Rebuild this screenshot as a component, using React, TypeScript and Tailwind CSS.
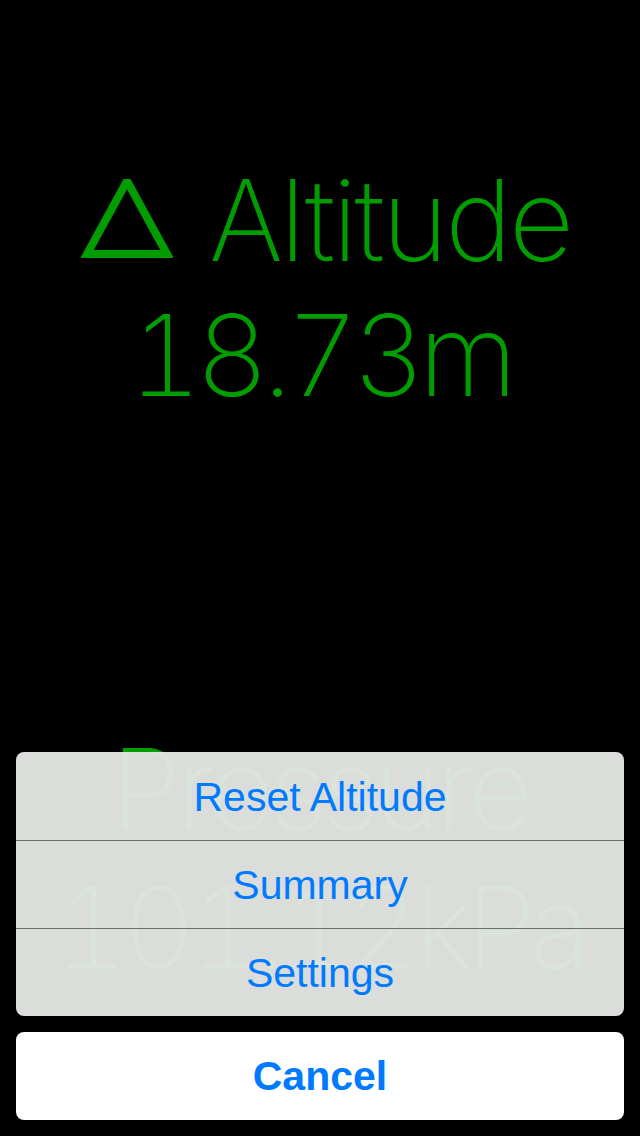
import React from "react";

const readings = [
  { label: "Pressure", value: "101.12kPa" },
];

function Delta() {
  return (
    <svg width="92" height="84" viewBox="0 0 92 84" className="shrink-0">
      <path d="M46 2 L86 75 L6 75 Z" fill="none" stroke="#009c00" strokeWidth="8" />
    </svg>
  );
}

/**
 * Altimeter screen with the options action sheet open
 */
export default function App() {
  const big = "text-[113px] leading-[113px] font-extralight text-[#009c00]";
  return (
    <div
      className="relative h-[1136px] w-[640px] overflow-hidden bg-black"
      style={{ fontFamily: "Inter, 'Liberation Sans', sans-serif" }}
    >
      {/* Readings */}
      <main className="flex flex-col items-center pt-[164px]">
        <div className="flex items-center gap-[36px] pl-[12px]">
          <Delta />
          <h1 className={`${big} tracking-[-3px]`}>Altitude</h1>
        </div>
        <p className={`${big} mt-[22px] tabular-nums tracking-[-6.5px]`}>18.73m</p>

        {readings.map((r) => (
          <div key={r.label} className="mt-[321px] flex flex-col items-center">
            <h2 className={`${big} tracking-[-4.5px]`}>{r.label}</h2>
            <p className={`${big} mt-[25px] tabular-nums tracking-[-6px]`}>{r.value}</p>
          </div>
        ))}
      </main>

      {/* Action sheet */}
      <div
        className="absolute inset-x-4 bottom-4 flex flex-col gap-4 text-[41px] text-[#007aff]"
        style={{ fontFamily: "'Liberation Sans', Arial, sans-serif" }}
      >
        <div className="flex flex-col overflow-hidden rounded-lg bg-[rgba(229,231,229,0.955)]">
          {["Reset Altitude", "Summary", "Settings"].map((label, i) => (
            <button
              key={label}
              className={`flex h-[88px] items-center justify-center pt-[3px] ${
                i > 0 ? "border-t border-[#6b7068]" : ""
              }`}
            >
              {label}
            </button>
          ))}
        </div>
        <button className="flex h-[88px] items-center justify-center rounded-lg bg-white pt-[2px] font-bold">
          Cancel
        </button>
      </div>
    </div>
  );
}
